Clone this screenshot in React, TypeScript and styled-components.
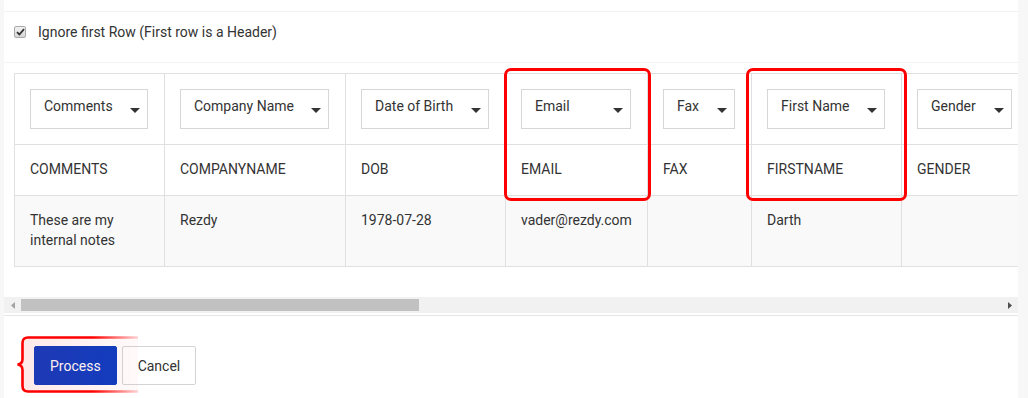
import React from "react";
import styled, { createGlobalStyle } from "styled-components";

interface ColumnProps {
  field: string;
  key: string;
  value: string;
  width: number;
}

const columns: ColumnProps[] = [
  { field: "Comments", key: "COMMENTS", value: "These are my internal notes", width: 150 },
  { field: "Company Name", key: "COMPANYNAME", value: "Rezdy", width: 181 },
  { field: "Date of Birth", key: "DOB", value: "1978-07-28", width: 160 },
  { field: "Email", key: "EMAIL", value: "vader@rezdy.com", width: 142 },
  { field: "Fax", key: "FAX", value: "", width: 104 },
  { field: "First Name", key: "FIRSTNAME", value: "Darth", width: 150 },
  { field: "Gender", key: "GENDER", value: "", width: 127 },
  { field: "Last Name", key: "LASTNAME", value: "Vader", width: 150 },
  { field: "Mobile", key: "MOBILE", value: "", width: 130 },
  { field: "Phone", key: "PHONE", value: "", width: 130 },
  { field: "Country", key: "COUNTRY", value: "", width: 140 },
];

const tableWidth = columns.reduce((sum, col) => sum + col.width, 0);

const GlobalStyle = createGlobalStyle`
  html, body {
    margin: 0;
    padding: 0;
    background: #f7f7f7;
  }
  body {
    font-family: Roboto, "Liberation Sans", Arial, sans-serif;
    font-size: 14px;
    color: #333;
  }
`;

const Panel = styled.div`
  margin-left: 4px;
  width: 1014px;
  height: 398px;
  background: #fff;
  overflow: hidden;
`;

const TopBar = styled.div`
  height: 11px;
  border-bottom: 1px solid #f1f1f1;
`;

const CheckRow = styled.label`
  display: flex;
  align-items: center;
  gap: 12px;
  padding: 10px 10px 20px;
  line-height: 20px;
  border-bottom: 1px solid #f3f3f3;
`;

const CheckBox = styled.span`
  display: flex;
  align-items: center;
  justify-content: center;
  box-sizing: border-box;
  width: 12px;
  height: 12px;
  border: 1px solid #a9a9a9;
  border-radius: 2px;
  background: linear-gradient(#f2f2f2, #d6d6d6);
`;

const TableArea = styled.div`
  position: relative;
  padding: 10px 0 30px 10px;
  overflow: hidden;
`;

const Table = styled.table<{ $width: number }>`
  width: ${(p) => p.$width}px;
  border-collapse: collapse;
  table-layout: fixed;
  line-height: 20px;
`;

const Col = styled.col<{ $width: number }>`
  width: ${(p) => p.$width}px;
`;

const Row = styled.tr<{ $shade?: boolean }>`
  background: ${(p) => (p.$shade ? "#f9f9f9" : "#fff")};
`;

const Cell = styled.td`
  border: 1px solid #e0e0e0;
  padding: 14px 16px 16px 15px;
  vertical-align: top;
  text-align: left;
  color: #333;
`;

const SelectCell = styled(Cell)`
  padding: 15px 16px 15px 15px;
`;

const SelectBox = styled.div`
  display: flex;
  justify-content: space-between;
  box-sizing: border-box;
  height: 40px;
  padding: 6px 7px 0 13px;
  border: 1px solid #d6d6d6;
  background: #fff;
  white-space: nowrap;
  overflow: hidden;
`;

const Caret = styled.span`
  align-self: center;
  margin-top: -3px;
  width: 0;
  height: 0;
  border-left: 5px solid transparent;
  border-right: 5px solid transparent;
  border-top: 5px solid #333;
  flex-shrink: 0;
`;

const Highlight = styled.div<{ $left: number; $width: number }>`
  position: absolute;
  top: 5px;
  left: ${(p) => p.$left}px;
  width: ${(p) => p.$width}px;
  height: 133px;
  box-sizing: border-box;
  border: 3px solid #ff0000;
  border-radius: 7px;
  pointer-events: none;
`;

const Scrollbar = styled.div`
  display: flex;
  height: 16px;
  margin-bottom: 2px;
  background: #f1f1f1;
`;

const ScrollButton = styled.div`
  display: flex;
  align-items: center;
  justify-content: center;
  width: 17px;
  flex-shrink: 0;
`;

const ScrollTrack = styled.div`
  flex: 1;
  display: flex;
  align-items: center;
`;

const ScrollThumb = styled.div`
  width: 398px;
  height: 12px;
  background: #c1c1c1;
`;

const Footer = styled.div`
  position: relative;
  display: flex;
  gap: 5px;
  padding: 30px 30px 0;
  border-top: 1px solid #e6e6e6;
`;

const Button = styled.button<{ $primary?: boolean }>`
  height: 39px;
  padding: 0 15px;
  font-family: Roboto, "Liberation Sans", Arial, sans-serif;
  font-size: 14px;
  border-radius: 2px;
  border: 1px solid ${(p) => (p.$primary ? "#0b3ec4" : "#d4d4d4")};
  background: ${(p) => (p.$primary ? "#0b3ec4" : "#fff")};
  color: ${(p) => (p.$primary ? "#fff" : "#333")};
`;

const Bracket = styled.svg`
  position: absolute;
  left: 12px;
  top: 19px;
  pointer-events: none;
`;

const App: React.FC = () => {
  return (
    <>
      <GlobalStyle />
      <Panel>
        <TopBar />
        <CheckRow>
          <CheckBox>
            <svg width="9" height="8" viewBox="0 0 9 8">
              <path d="M1 4.2 L3.4 6.5 L8 1.2" fill="none" stroke="#333" strokeWidth="1.8" />
            </svg>
          </CheckBox>
          Ignore first Row (First row is a Header)
        </CheckRow>
        <TableArea>
          <Table $width={tableWidth}>
            <colgroup>
              {columns.map((col) => (
                <Col key={col.key} $width={col.width} />
              ))}
            </colgroup>
            <tbody>
              <Row>
                {columns.map((col) => (
                  <SelectCell key={col.key}>
                    <SelectBox>
                      <span>{col.field}</span>
                      <Caret />
                    </SelectBox>
                  </SelectCell>
                ))}
              </Row>
              <Row>
                {columns.map((col) => (
                  <Cell key={col.key}>{col.key}</Cell>
                ))}
              </Row>
              <Row $shade>
                {columns.map((col) => (
                  <Cell key={col.key}>{col.value}</Cell>
                ))}
              </Row>
            </tbody>
          </Table>
          <Highlight $left={500} $width={147} />
          <Highlight $left={742} $width={161} />
        </TableArea>
        <Scrollbar>
          <ScrollButton>
            <svg width="4" height="7" viewBox="0 0 4 7">
              <path d="M4 0 L0 3.5 L4 7 Z" fill="#a3a3a3" />
            </svg>
          </ScrollButton>
          <ScrollTrack>
            <ScrollThumb />
          </ScrollTrack>
          <ScrollButton>
            <svg width="4" height="7" viewBox="0 0 4 7">
              <path d="M0 0 L4 3.5 L0 7 Z" fill="#505050" />
            </svg>
          </ScrollButton>
        </Scrollbar>
        <Footer>
          <Bracket width="124" height="60" viewBox="0 0 124 60">
            <defs>
              <linearGradient id="fadeStroke" x1="0" y1="0" x2="124" y2="0" gradientUnits="userSpaceOnUse">
                <stop offset="0" stopColor="#ff0000" />
                <stop offset="0.62" stopColor="#ff0000" />
                <stop offset="1" stopColor="#ff0000" stopOpacity="0.12" />
              </linearGradient>
              <linearGradient id="fadeFill" x1="0" y1="0" x2="124" y2="0" gradientUnits="userSpaceOnUse">
                <stop offset="0" stopColor="#ff0000" stopOpacity="0.09" />
                <stop offset="1" stopColor="#ff0000" stopOpacity="0.02" />
              </linearGradient>
            </defs>
            <path
              d="M122 2.5 H12 Q6.5 2.5 6.5 8 V24 Q6.5 29 1.5 29.5 Q6.5 30 6.5 35 V51 Q6.5 56.5 12 56.5 H122 Z"
              fill="url(#fadeFill)"
              stroke="none"
            />
            <path
              d="M122 2.5 H12 Q6.5 2.5 6.5 8 V24 Q6.5 29 1.5 29.5 Q6.5 30 6.5 35 V51 Q6.5 56.5 12 56.5 H122"
              fill="none"
              stroke="url(#fadeStroke)"
              strokeWidth="2.6"
            />
          </Bracket>
          <Button $primary>Process</Button>
          <Button>Cancel</Button>
        </Footer>
      </Panel>
    </>
  );
};

export default App;
